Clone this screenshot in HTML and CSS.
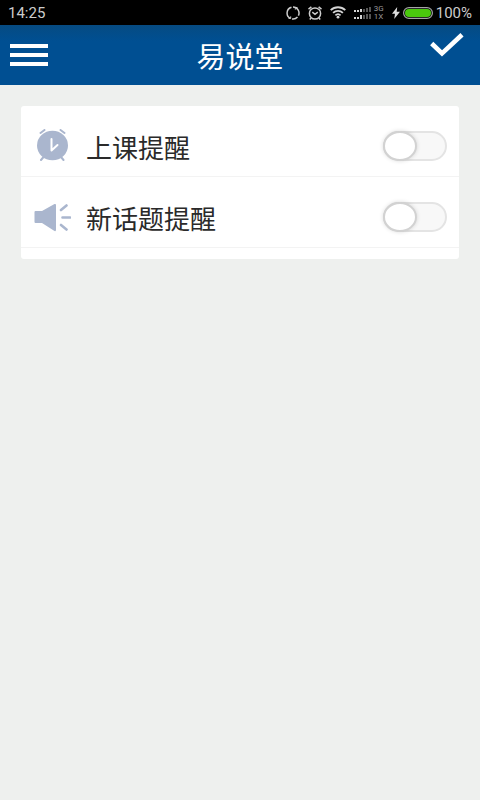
FILE: index.html
```html
<!DOCTYPE html>
<html lang="zh-CN">
<head>
<meta charset="utf-8">
<meta name="viewport" content="width=device-width, initial-scale=1">
<title>易说堂</title>
<link rel="stylesheet" href="styles.css">
</head>
<body>
<div class="status">
  <span class="time">14:25</span>
  <div class="indicators">
    <svg width="14" height="14" viewBox="0 0 14 14" fill="none" stroke="#ccc" stroke-width="1.5" aria-hidden="true"><path d="M4.500 12.400A6 6 0 0 1 5.500 1.200M7 1A6 6 0 0 1 12.400 9.600M11.500 11A6 6 0 0 1 6 12.900"/><path d="M2.500 12.400h2.200v-2M11.500 1.600H9.300v2" stroke-width="1"/></svg>
    <svg width="14" height="14" viewBox="0 0 14 14" fill="none" stroke="#ccc" stroke-width="1.5" aria-hidden="true"><circle cx="7" cy="7.5" r="5.6"/><path d="M.5 3.200 3.400.8M13.500 3.200 10.600.8M4.300 6.200 7 8.300 9.800 6.200M3 12l-1.200 1.500M11 12l1.200 1.500"/></svg>
    <svg width="16" height="13" viewBox="0 0 16 13" fill="none" stroke="#d4d4d4" stroke-width="1.8" aria-hidden="true"><path d="M.7 4.200a10.500 10.500 0 0 1 14.600 0M3.100 6.900a7 7 0 0 1 9.800 0M5.400 9.300a3.800 3.800 0 0 1 5.200 0"/><circle cx="8" cy="11.200" r="1.400" fill="#d4d4d4" stroke="none"/></svg>
    <div class="cell">
      <svg width="17" height="12" viewBox="0 0 17 12" aria-hidden="true"><path fill="#d4d4d4" d="M0 3h2v2H0zM3 3h2v2H3zM6 2h2v3H6zM0 10h2v2H0zM3 10h2v2H3zM6 8h2v4H6z"/><path fill="#555" d="M9 2h2v3H9zM12 1h2v4h-2zM15 0h2v5h-2zM9 8h2v4H9zM12 7h2v5h-2zM15 7h2v5h-2z"/></svg>
      <div class="network"><span>3G</span><span>1X</span></div>
    </div>
    <div class="power">
      <svg width="8" height="12" viewBox="0 0 8 12" aria-hidden="true"><path fill="#ddd" d="M5.200 0 0 6.800h3L2.200 12 8 4.800H4.700z"/></svg>
      <svg width="30" height="12" viewBox="0 0 30 12" aria-hidden="true"><rect x=".6" y=".6" width="28.8" height="10.8" rx="5.4" fill="#000" stroke="#a5a5a5" stroke-width="1.2"/><rect x="2" y="2" width="26" height="8" rx="4" fill="#4ac80d"/></svg>
      <span class="percent">100%</span>
    </div>
  </div>
</div>
<header class="bar">
  <button class="icon-button" type="button" aria-label="菜单">
    <svg width="38" height="22" viewBox="0 0 38 22" aria-hidden="true"><path fill="#fff" d="M0 0h38v4H0zM0 9h38v4H0zM0 18h38v4H0z"/></svg>
  </button>
  <h1 class="title">易说堂</h1>
  <button class="icon-button confirm" type="button" aria-label="确定">
    <svg width="34" height="24" viewBox="0 0 34 24" aria-hidden="true"><path fill="none" stroke="#fff" stroke-width="4.600" d="M1.700 10.500 12 20.400 32 1.800"/></svg>
  </button>
</header>
<main class="content">
  <div class="card">
    <label class="row">
      <svg class="row-icon" width="38" height="34" viewBox="0 0 38 34" aria-hidden="true"><g fill="none" stroke="#aab6ce" stroke-width="2" stroke-linecap="round"><path d="M7.500 4 11.500 1M31.500 4 27.500 1M8 31 10.500 28M30.500 31 28 28"/></g><ellipse cx="19.500" cy="16.500" rx="15.500" ry="14.700" fill="#aab6ce"/><path d="M18.500 10v11.500L24.500 16" fill="none" stroke="#fff" stroke-width="2" stroke-linecap="round" stroke-linejoin="round"/></svg>
      <span class="name">上课提醒</span>
      <input class="switch" type="checkbox" role="switch">
    </label>
    <label class="row">
      <svg class="row-icon" width="38" height="34" viewBox="0 0 38 34" aria-hidden="true"><path fill="#aab6ce" d="M2.500 11H9L21.500 4q1.500-.5 1.500 1v25q0 1.500-1.500 1L9 23H2.500Q1.500 23 1.500 22V12q0-1 1-1z"/><path d="m28 10 5.500-4.500M29.500 17.500h7.500M28 25l5.500 4.500" fill="none" stroke="#aab6ce" stroke-width="2.600" stroke-linecap="round"/></svg>
      <span class="name">新话题提醒</span>
      <input class="switch" type="checkbox" role="switch">
    </label>
  </div>
</main>
</body>
</html>
```
FILE: styles.css
```css
*,
*::before {
  box-sizing: border-box;
}

body {
  margin: 0;
  min-height: 100vh;
  background: #eef0ee;
  color: #2a2a2a;
  font-family: Roboto, "Noto Sans CJK SC", sans-serif;
}

.status {
  display: flex;
  align-items: center;
  justify-content: space-between;
  height: 25px;
  padding: 0 8px;
  background: #000;
  color: #ccc;
  font-size: 15px;
  line-height: 24px;
}

.time,
.percent {
  padding-top: 1px;
}

.indicators {
  display: flex;
  align-items: center;
  gap: 8px;
}

.cell,
.power {
  display: flex;
  align-items: center;
  gap: 3px;
}

.network {
  display: flex;
  flex-direction: column;
  color: #999;
  font-size: 8px;
  line-height: 8px;
}

.bar {
  display: grid;
  grid-template-columns: 40px 1fr 40px;
  align-items: center;
  height: 60px;
  padding: 0 10px;
  background: linear-gradient(#064b82, #004f92 16px);
  color: #fff;
}

.icon-button {
  display: flex;
  align-items: center;
  padding: 0;
  border: 0;
  background: none;
}

.confirm {
  align-self: start;
  padding-top: 8px;
}

.title {
  margin: 0;
  padding-top: 6px;
  font-size: 29px;
  font-weight: 400;
  line-height: 54px;
  text-align: center;
}

.content {
  padding: 21px;
}

.card {
  padding-bottom: 11px;
  border-radius: 3px;
  background: #fff;
}

.row {
  display: flex;
  align-items: center;
  height: 71px;
  padding: 10px 12px 0;
  border-bottom: 1px solid #f3f3f3;
}

.row-icon {
  flex: none;
  margin-right: 15px;
}

.name {
  flex: 1;
  padding-top: 6px;
  font-size: 26px;
  line-height: 36px;
}

.switch {
  position: relative;
  flex: none;
  width: 64px;
  height: 30px;
  margin: 0;
  border: 2px solid #e4e4e4;
  border-radius: 15px;
  background: #f8f8f8;
  appearance: none;
}

.switch::before {
  content: "";
  position: absolute;
  top: -2px;
  left: -2px;
  width: 34px;
  height: 30px;
  border: 2px solid #d2d2d2;
  border-radius: 50%;
  background: #fff;
  box-shadow: 0 0 4px rgba(0, 0, 0, 0.15);
}

.switch:checked::before {
  left: 28px;
}
```
